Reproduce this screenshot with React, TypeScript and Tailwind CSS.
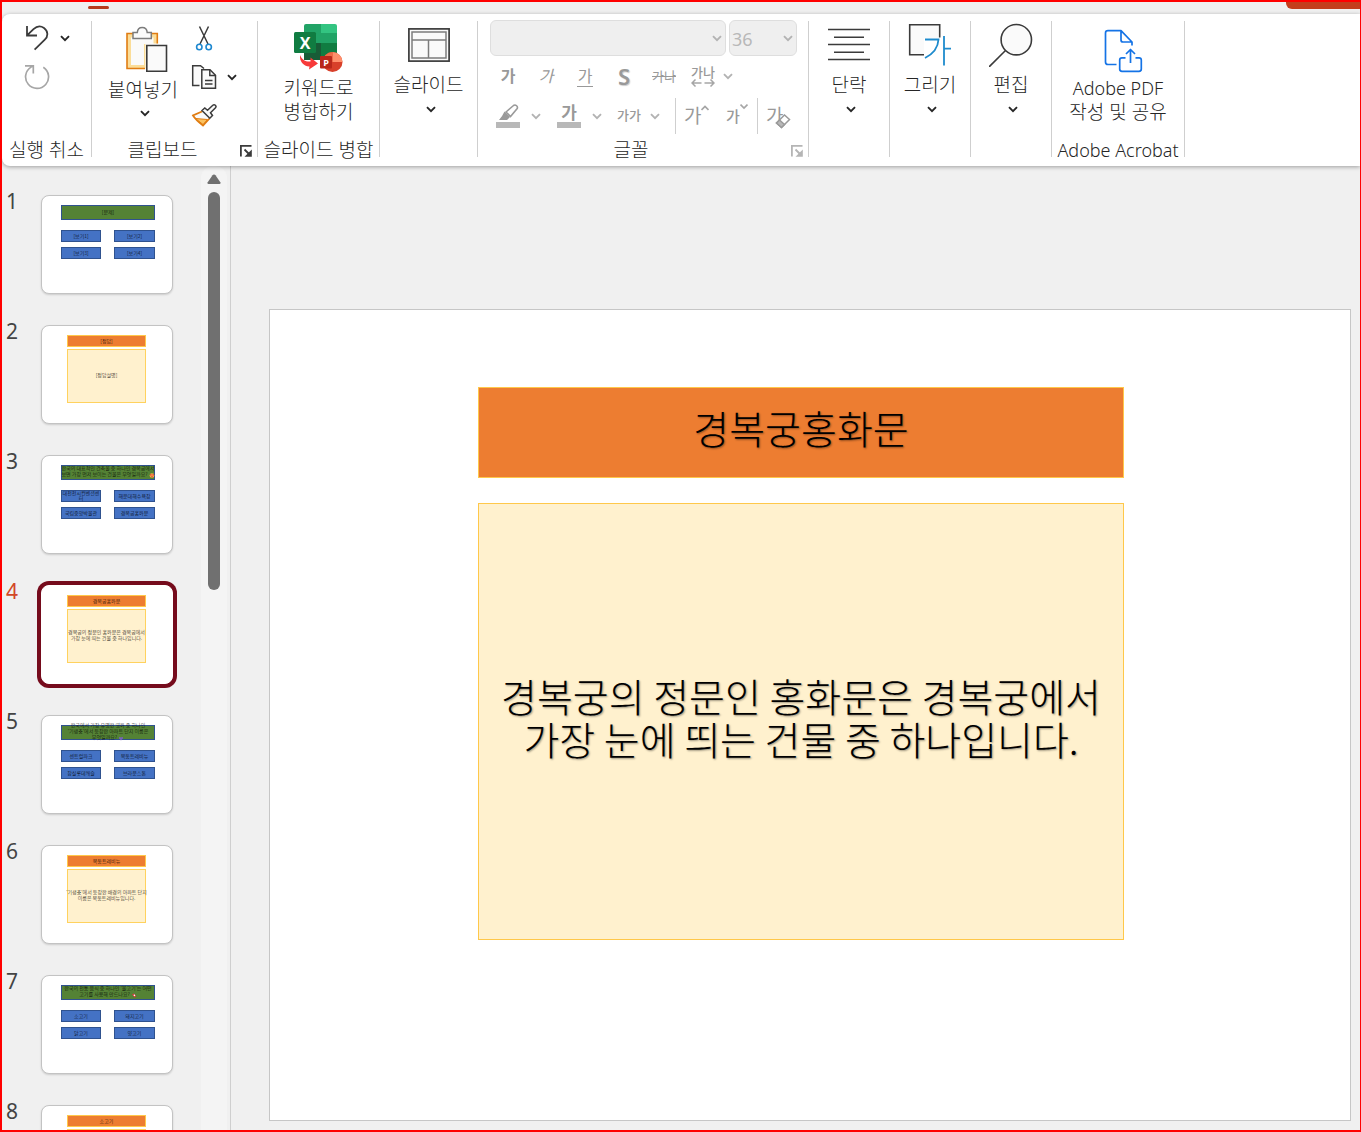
import React from "react";

const ink = "#3b3b3b";
const dim = "#a6a6a6";

function Chevron({ muted = false }: { muted?: boolean }) {
  return (
    <svg width="10" height="7" viewBox="0 0 10 7" fill="none" className="shrink-0">
      <path d="M1 1.2 5 5.2 9 1.2" stroke={muted ? "#b3b3b3" : "#262626"} strokeWidth="1.9" />
    </svg>
  );
}

function Launcher({ muted = false }: { muted?: boolean }) {
  const c = muted ? "#b5b5b5" : ink;
  return (
    <button type="button" aria-label="대화 상자 표시" className="mt-1 mr-1 shrink-0">
      <svg width="14" height="14" viewBox="0 0 14 14" fill="none" stroke={c} strokeWidth="1.8">
        <path d="M1.9 12.500V1.900H12.500M5.500 5.500l5.500 5.500" />
        <path d="M12.800 5.500V12.800H5.500Z" fill={c} stroke="none" />
      </svg>
    </button>
  );
}

function UndoIcon() {
  return (
    <svg width="26" height="26" viewBox="24 25 26 26" fill="none" stroke={ink} strokeWidth="1.8">
      <path d="M27 26V35.5H37M27.3 35.2 33.5 29.2C36.500 26.300 40.500 25.500 44 28C48.300 31.200 48.300 36.300 44.800 39.700L34.600 49.600" />
    </svg>
  );
}

function RedoIcon() {
  return (
    <svg width="26" height="26" viewBox="24 64 26 26" fill="none" stroke={dim} strokeWidth="1.7">
      <path d="M25 65.800H33.300V73.500M43.300 67.200A11.500 11.500 0 1 1 31 67.100L33 66" />
    </svg>
  );
}

function PasteIcon() {
  return (
    <svg width="42" height="46" viewBox="126 26 42 46" fill="none">
      <path d="M127 33.500H157.500V43.500H145.500V68.500H127Z" fill="#fbdd98" />
      <path d="M157.300 43.500V33.500H127V68.500H145" stroke="#e07c12" strokeWidth="1.600" />
      <path d="M131 37.500H153.500V44H144V65H131Z" fill="#fafafa" />
      <path d="M133 38.500V32.500H137.300C137.500 29.500 139.500 27.500 142.200 27.500S147 29.500 147.200 32.500H151.300V38.500Z" fill="#fafafa" stroke="#7c7c7c" strokeWidth="1.5" />
      <path d="M146.800 45.500H166.500V71.200H146.800Z" fill="#fafafa" stroke={ink} strokeWidth="1.6" />
    </svg>
  );
}

function ScissorsIcon() {
  return (
    <svg width="26" height="26" viewBox="191 26 26 26" fill="none">
      <path d="M199.500 26.500 208 44M208.500 26.500 200 44" stroke={ink} strokeWidth="1.5" />
      <circle cx="199.300" cy="47" r="2.700" stroke="#1e88d0" strokeWidth="1.6" />
      <circle cx="208.700" cy="47" r="2.700" stroke="#1e88d0" strokeWidth="1.6" />
    </svg>
  );
}

function CopyIcon() {
  return (
    <svg width="26" height="26" viewBox="191 64 26 26" fill="none" stroke={ink} strokeWidth="1.5">
      <path d="M199.500 85.500H192.700V65.700H200.500L204 68.500" fill="#fafafa" />
      <path d="M201.800 69.800H210L215.500 75.300V88.300H201.800Z" fill="#fafafa" />
      <path d="M209.800 70V75.500H215.500M205 80.500H212.500M205 84H212.500" />
    </svg>
  );
}

function BrushIcon() {
  return (
    <svg width="26" height="26" viewBox="191 102 26 26" fill="none">
      <path d="M202 111.500 193 115.500C195.500 119.500 198.500 122 203 125.500L209.500 118.500" fill="#fafafa" stroke="#e07c12" strokeWidth="1.800" />
      <path d="M195.500 118.500 207.500 119.500 203 124.500Z" fill="#fbc25f" stroke="#e07c12" strokeWidth="1" />
      <path d="M202 110.500 204.800 108 207.500 110.300 212.800 105.300C214.500 103.800 217 106 215.500 107.800L210.500 112.800 212.500 115.500 209.800 118.200Z" fill="#fafafa" stroke={ink} strokeWidth="1.500" />
    </svg>
  );
}

function MergeIcon() {
  return (
    <svg width="50" height="50" viewBox="294 23 50 50">
      <path d="M306 24H321V33H304V26Q304 24 306 24Z" fill="#21a366" />
      <path d="M321 24H335Q337 24 337 26V33H321Z" fill="#33c481" />
      <path d="M304 33H321V43H304Z" fill="#21a366" />
      <path d="M321 33H337V43H321Z" fill="#21a366" />
      <path d="M304 43H321V60H304Z" fill="#185c37" />
      <path d="M321 43H337V60H321Z" fill="#107c41" />
      <rect x="294" y="32" width="22" height="21" rx="1.500" fill="#107c41" />
      <text x="305" y="48.500" textAnchor="middle" fontSize="16" fontWeight="700" fill="#fff" fontFamily="Open Sans, sans-serif">X</text>
      <circle cx="332.500" cy="62" r="10" fill="#d8402a" />
      <path d="M332.500 52A10 10 0 0 1 342.500 62H332.500Z" fill="#ff8f6b" />
      <path d="M332.500 52A10 10 0 0 0 322.500 62H332.500Z" fill="#ed6c47" />
      <path d="M300 55C302 60 306 62 310.500 61.500V57.500L318 63.500 309 69.500 309.500 66.500C303 66 299.500 61.500 300 55Z" fill="#f73a3a" />
      <rect x="320" y="56" width="12" height="12.500" rx="1" fill="#b9271a" />
      <text x="326" y="66" textAnchor="middle" fontSize="9" fontWeight="700" fill="#fff" fontFamily="Open Sans, sans-serif">P</text>
    </svg>
  );
}

function LayoutIcon() {
  return (
    <svg width="42" height="34" viewBox="0 0 42 34" fill="none">
      <rect x="0.900" y="0.900" width="40.200" height="32.200" fill="#fafafa" stroke={ink} strokeWidth="1.700" />
      <path d="M4 4H38V30H4ZM4 12H38M20.500 12V30" stroke="#7c7c7c" strokeWidth="1.500" />
    </svg>
  );
}

function ParagraphIcon() {
  return (
    <svg width="42" height="34" viewBox="0 0 42 34" stroke={ink} strokeWidth="1.600">
      <path d="M0 1.500H42M6 9.200H36M0 16.500H42M6 24.200H36M0 31.500H42" />
    </svg>
  );
}

function DrawIcon() {
  return (
    <svg width="44" height="44" viewBox="908 23 44 44" fill="none">
      <path d="M922.500 55H909.700V24.700H939.700V38H924V55Z" fill="#fafafa" />
      <path d="M924 54.800H909.700V24.700H939.700V37.500" stroke={ink} strokeWidth="1.600" />
      <path d="M925 39.500H938.500C938 48 933 54 925 58M944 36V65.500M944 48.700H951" stroke="#1e8bcd" strokeWidth="1.800" />
    </svg>
  );
}

function FindIcon() {
  return (
    <svg width="44" height="44" viewBox="989 23 44 44" fill="none" stroke={ink} strokeWidth="1.600">
      <circle cx="1016.300" cy="39.700" r="15.200" fill="#fafafa" />
      <path d="M1005.500 50.500 989 67" />
    </svg>
  );
}

function PdfIcon() {
  return (
    <svg width="40" height="44" viewBox="1103 29 40 44" fill="none" stroke="#1473e6" strokeWidth="1.700" strokeLinejoin="round">
      <path d="M1116.500 64.500H1108Q1105.500 64.500 1105.500 62V33Q1105.500 30.700 1108 30.700H1121L1132 42V45.500M1121 31V40Q1121 42 1123 42H1132" />
      <path d="M1125.500 57.800H1122Q1119.700 57.800 1119.700 60V69Q1119.700 71.300 1122 71.300H1139Q1141.300 71.300 1141.300 69V60Q1141.300 57.800 1139 57.800H1135.500M1130.500 63V50M1126 54 1130.500 49.500 1135 54" />
    </svg>
  );
}

function HighlighterIcon() {
  return (
    <svg width="24" height="24" viewBox="0 0 24 24" fill="none">
      <rect y="18" width="24" height="6" fill="#b8b8b8" />
      <path d="M10 8 17.500 1.500C19.500 0 22.500 2.500 21 4.800L14.500 12.500Z" stroke="#9a9a9a" strokeWidth="1.600" />
      <path d="M8.500 7.500 14 13 11 16H3Q6.500 12 8.500 7.500Z" fill="#9a9a9a" />
    </svg>
  );
}

function EraserIcon() {
  return (
    <svg width="16" height="16" viewBox="0 0 16 16" fill="#fff" stroke="#9a9a9a" strokeWidth="1.500">
      <path d="M1.500 10 9.500 2 14.500 6.500 6.500 14.500Z" />
      <path d="M1.500 10 4.500 7 9.500 11.500 6.500 14.500Z" fill="#b8b8b8" />
    </svg>
  );
}

function Group({ width, label, launcher, children }: {
  width: string;
  label?: string;
  launcher?: React.ReactNode;
  children: React.ReactNode;
}) {
  const latin = label?.startsWith("Adobe");
  return (
    <section className={`${width} flex shrink-0 flex-col justify-between border-r border-[#cfcfcf]`}>
      {children}
      <div className="flex h-4 items-center">
        <span className={`flex-1 pt-[2px] text-center leading-4 whitespace-nowrap ${latin ? "text-[18px]" : "text-[19px]"} ${launcher ? "pr-[6px]" : ""}`}>
          {label}
        </span>
        {launcher}
      </div>
    </section>
  );
}

function MenuButton({ icon, label }: { icon: React.ReactNode; label: string }) {
  return (
    <button type="button" className="flex w-full flex-col items-center">
      <span className="flex h-12 items-center">{icon}</span>
      <span className="text-[19px] leading-8 whitespace-nowrap">{label}</span>
      <span className="mt-[2px] ml-1 flex h-3 items-center"><Chevron /></span>
    </button>
  );
}

function SmallMenu({ label }: { label: string }) {
  return (
    <button type="button" disabled aria-label={label} className="flex h-8 w-8 items-center justify-center">
      <Chevron muted />
    </button>
  );
}

function FontGroup() {
  return (
    <div className="-mt-px pl-3 font-normal text-[#999]">
      <div className="flex gap-[3px]">
        <label className="relative flex items-center">
          <select disabled aria-label="글꼴" className="h-9 w-[236px] appearance-none rounded-md border border-[#dedede] bg-[#efefef]">
            <option />
          </select>
          <span className="absolute right-1"><Chevron muted /></span>
        </label>
        <label className="relative flex items-center">
          <select disabled aria-label="글꼴 크기" className="h-9 w-[68px] appearance-none rounded-md border border-[#dedede] bg-[#efefef] pt-[2px] pl-[2px] text-[18px] text-[#b8b8b8] opacity-100">
            <option>36</option>
          </select>
          <span className="absolute right-1"><Chevron muted /></span>
        </label>
      </div>
      <div className="mt-1 flex h-8 items-center leading-5">
        <button type="button" disabled className="w-9 text-[16px] font-bold">가</button>
        <button type="button" disabled className="w-10 text-[16px] italic">가</button>
        <button type="button" disabled className="flex w-[38px] justify-center text-[16px]">
          <span className="w-4 border-b border-[#999]">가</span>
        </button>
        <button type="button" disabled className="w-10 text-[22px] font-semibold [text-shadow:1px_1px_1px_#ccc]">S</button>
        <button type="button" disabled className="w-10 text-[13px] line-through">가나</button>
        <button type="button" disabled className="flex w-[38px] flex-col items-center text-[13px] leading-[14px] font-medium">
          가나
          <svg width="24" height="8" viewBox="0 0 24 8" fill="none" stroke="#a6a6a6" strokeWidth="1.500">
            <path d="M10.500 4H1M4.500 0.500 1 4 4.500 7.500M13.500 4H23M19.500 0.500 23 4 19.500 7.500" />
          </svg>
        </button>
        <span className="-ml-[10px]"><SmallMenu label="문자 간격" /></span>
      </div>
      <div className="mt-[6px] flex h-9 items-center">
        <button type="button" disabled aria-label="텍스트 강조 색" className="flex w-9 justify-center"><HighlighterIcon /></button>
        <span className="-mx-1 flex w-7 justify-center"><SmallMenu label="강조 색 선택" /></span>
        <button type="button" disabled className="ml-[11px] flex w-6 flex-col items-center text-[17px] leading-[18px] font-bold">
          가
          <span className="h-[6px] w-6 bg-[#b8b8b8]" />
        </button>
        <SmallMenu label="글꼴 색 선택" />
        <button type="button" disabled className="ml-[2px] w-7 text-center text-[13px] font-medium whitespace-nowrap">가가</button>
        <span className="-mx-1"><SmallMenu label="대/소문자 바꾸기" /></span>
        <span className="ml-2 h-9 border-l border-[#cfcfcf]" />
        <button type="button" disabled aria-label="글꼴 크기 크게" className="ml-2 flex w-[26px] text-[19px] leading-6">
          가
          <svg width="8" height="8" viewBox="0 0 8 8" fill="none" stroke={dim} strokeWidth="1.700" className="shrink-0"><path d="M0.500 6 4 2.500 7.500 6" /></svg>
        </button>
        <button type="button" disabled aria-label="글꼴 크기 작게" className="ml-4 flex w-[22px] text-[15px] leading-7 font-medium">
          가
          <svg width="8" height="8" viewBox="0 0 8 8" fill="none" stroke={dim} strokeWidth="1.700" className="shrink-0"><path d="M0.500 2.500 4 6 7.500 2.500" /></svg>
        </button>
        <span className="ml-[9px] h-9 border-l border-[#cfcfcf]" />
        <button type="button" disabled aria-label="모든 서식 지우기" className="relative ml-2 w-6 text-left text-[19px] leading-6">
          가
          <span className="absolute top-[9px] left-[9px]"><EraserIcon /></span>
        </button>
      </div>
    </div>
  );
}

function Ribbon() {
  return (
    <div role="toolbar" className="relative z-10 flex h-[152px] shrink-0 overflow-hidden rounded-l-lg bg-white pt-[7px] pb-[9px] font-light text-[#262626] shadow-[0_1px_4px_rgba(0,0,0,0.35)]">
      <Group width="w-[90px]" label="실행 취소">
        <div className="flex flex-col gap-[13px] pt-1 pl-[22px]">
          <div className="flex items-center gap-[10px]">
            <button type="button" aria-label="실행 취소"><UndoIcon /></button>
            <button type="button" aria-label="실행 취소 목록"><Chevron /></button>
          </div>
          <button type="button" aria-label="다시 실행" className="w-[26px]"><RedoIcon /></button>
        </div>
      </Group>
      <Group width="w-[166px]" label="클립보드" launcher={<Launcher />}>
        <div className="flex pl-[14px]">
          <button type="button" className="flex w-[74px] flex-col items-center pt-[5px]">
            <span className="ml-2"><PasteIcon /></span>
            <span className="mt-[2px] text-[19px] leading-8 whitespace-nowrap">붙여넣기</span>
            <span className="mt-px ml-1 flex h-3 items-center"><Chevron /></span>
          </button>
          <div className="ml-[11px] flex flex-col gap-[12px] pt-[5px]">
            <button type="button" aria-label="잘라내기" className="w-[26px]"><ScissorsIcon /></button>
            <div className="flex items-center gap-[10px]">
              <button type="button" aria-label="복사"><CopyIcon /></button>
              <button type="button" aria-label="복사 옵션"><Chevron /></button>
            </div>
            <button type="button" aria-label="서식 복사" className="w-[26px]"><BrushIcon /></button>
          </div>
        </div>
      </Group>
      <Group width="w-[122px]" label="슬라이드 병합">
        <button type="button" className="flex flex-col items-center pt-[2px] text-[19px] leading-6">
          <MergeIcon />
          <span className="mt-[3px]">키워드로<br />병합하기</span>
        </button>
      </Group>
      <Group width="w-[98px]">
        <MenuButton icon={<LayoutIcon />} label="슬라이드" />
      </Group>
      <Group width="w-[331px]" label="글꼴" launcher={<Launcher muted />}>
        <FontGroup />
      </Group>
      <Group width="w-[81px]">
        <MenuButton icon={<ParagraphIcon />} label="단락" />
      </Group>
      <Group width="w-[81px]">
        <MenuButton icon={<DrawIcon />} label="그리기" />
      </Group>
      <Group width="w-[81px]">
        <MenuButton icon={<FindIcon />} label="편집" />
      </Group>
      <Group width="w-[133px]" label="Adobe Acrobat">
        <button type="button" className="flex flex-col items-center pt-2 text-[19px] leading-6">
          <span className="ml-[10px]"><PdfIcon /></span>
          <span className="mt-[3px] text-[18px]">Adobe PDF</span>
          <span>작성 및 공유</span>
        </button>
      </Group>
    </div>
  );
}

type Mark = "face" | "heart" | "meat";
type Slide =
  | { kind: "quiz"; question: string[]; mark?: Mark; options: string[][] }
  | { kind: "answer"; title: string; body: string[] };

const slides: Slide[] = [
  { kind: "quiz", question: ["[문제]"], options: [["[보기1]"], ["[보기2]"], ["[보기3]"], ["[보기4]"]] },
  { kind: "answer", title: "[정답]", body: ["[정답설명]"] },
  {
    kind: "quiz",
    question: ["한국의 대표적인 건축물 중 하나인 경복궁에서", "보면 가장 먼저 보이는 건물은 무엇일까요?"],
    mark: "face",
    options: [["대전전시컨벤션센", "터"], ["해운대해수욕장"], ["국립중앙박물관"], ["경복궁홍화문"]],
  },
  { kind: "answer", title: "경복궁홍화문", body: ["경복궁의 정문인 홍화문은 경복궁에서", "가장 눈에 띄는 건물 중 하나입니다."] },
  {
    kind: "quiz",
    question: ["한국에서 가장 유명한 영화 중 하나인", "'기생충'에서 등장한 아파트 단지 이름은", "무엇일까요?"],
    mark: "heart",
    options: [["센트럴파크"], ["목동트레비뉴"], ["잠실롯데캐슬"], ["브라운스톤"]],
  },
  { kind: "answer", title: "목동트레비뉴", body: ["'기생충'에서 등장한 배경의 아파트 단지", "이름은 목동트레비뉴입니다."] },
  {
    kind: "quiz",
    question: ["한국의 전통 음식 중 하나인 '불고기'는 어떤", "고기를 사용해 만드나요?"],
    mark: "meat",
    options: [["소고기"], ["돼지고기"], ["닭고기"], ["양고기"]],
  },
  { kind: "answer", title: "소고기", body: [] },
];

function Emoji({ mark }: { mark: Mark }) {
  return (
    <svg width="6" height="5" viewBox="0 0 6 6" className="ml-px inline-block align-middle">
      {mark === "face" && (
        <>
          <circle cx="3" cy="3" r="2.800" fill="#f6b83c" />
          <path d="M0.500 1.500h2v1.500h-2zM3.500 1.500h2v1.500h-2zM2 4h2v1H2z" fill="#e2304a" />
        </>
      )}
      {mark === "heart" && <path d="M3 5.500 0.500 2.800Q0.500 0.500 3 1.800 5.500 0.500 5.500 2.800Z" fill="#7a63b8" />}
      {mark === "meat" && (
        <>
          <path d="M0.500 1.500 3 0.500 5.800 4 3.500 5.500Z" fill="#d23a3a" />
          <circle cx="3.500" cy="2.800" r="1" fill="#fff" />
        </>
      )}
    </svg>
  );
}

function Lines({ lines, mark }: { lines: string[]; mark?: Mark }) {
  return (
    <>
      {lines.map((line, i) => (
        <span key={line} className="block whitespace-nowrap">
          {line}
          {mark && i === lines.length - 1 && <Emoji mark={mark} />}
        </span>
      ))}
    </>
  );
}

function Thumbnail({ slide }: { slide: Slide }) {
  if (slide.kind === "quiz") {
    return (
      <span className="flex flex-col gap-[10px] pt-[9px] pr-[17px] pl-[19px]">
        <span className="flex h-[15px] flex-col items-center justify-center border border-[#2f528f] bg-[#548235] pb-[2px]">
          <Lines lines={slide.question} mark={slide.mark} />
        </span>
        <span className="grid grid-cols-[40fr_41fr] gap-x-[13px] gap-y-[5px]">
          {slide.options.map((option) => (
            <span key={option[0]} className="flex h-3 flex-col items-center justify-center border border-[#2f528f] bg-[#4472c4] pb-[2px] leading-[5px]">
              <Lines lines={option} />
            </span>
          ))}
        </span>
      </span>
    );
  }
  return (
    <span className="flex flex-col gap-[2px] pt-[9px] pr-[26px] pl-[25px]">
      <span className="flex h-3 flex-col items-center justify-center border border-[#ffc84a] bg-[#ed7d31] pb-px">{slide.title}</span>
      <span className="flex h-[54px] flex-col items-center justify-center border border-[#ffd25e] bg-[#fff1ce] pb-[3px]">
        <Lines lines={slide.body} />
      </span>
    </span>
  );
}

function SlideList({ selected }: { selected: number }) {
  return (
    <aside className="flex shrink-0 border-r border-[#cfcfcf]">
      <ol className="flex w-[199px] flex-col gap-[31px] overflow-hidden pt-[29px] pl-1">
        {slides.map((slide, i) => {
          const current = i === selected;
          return (
            <li key={i} className="flex h-[99px] shrink-0">
              <span className={current ? "w-[35px] text-[21px] leading-3 text-[#d24726]" : "w-[35px] text-[21px] leading-3 text-[#444]"}>
                {i + 1}
              </span>
              <button
                type="button"
                aria-label={`슬라이드 ${i + 1}`}
                className={
                  "flex w-[132px] flex-col overflow-hidden rounded-lg border bg-white text-center font-['Noto_Sans_CJK_KR',sans-serif] text-[5px] leading-[6px] font-light text-black " +
                  (current ? "border-white ring-4 ring-[#750b1c]" : "border-[#c3c3c3] shadow-[0_1px_2px_rgba(0,0,0,0.15)]")
                }
              >
                <Thumbnail slide={slide} />
              </button>
            </li>
          );
        })}
      </ol>
      <div className="mr-[3px] flex w-[26px] flex-col items-center rounded-t-xl bg-[#f4f4f4] pt-2">
        <svg width="14" height="10" viewBox="0 0 14 10">
          <path d="M7 0.500Q8 0.500 8.500 1.200L13.500 8.500Q13.800 10 12.500 10H1.500Q0.200 10 0.500 8.500L5.500 1.200Q6 0.500 7 0.500Z" fill="#707070" />
        </svg>
        <div className="mt-2 h-[398px] w-3 rounded-full bg-[#707070]" />
      </div>
    </aside>
  );
}

function SlideCanvas() {
  return (
    <main className="flex min-w-0 flex-1 flex-col justify-end pr-[9px] pb-[9px] pl-[38px] font-['Noto_Sans_CJK_KR',sans-serif]">
      <article className="flex aspect-[1082/812] flex-col gap-[25px] border border-[#c6c6c6] bg-white pt-[77px] pr-[226px] pl-[208px] text-center text-[39px] leading-[43px] font-light break-keep text-black [text-shadow:1px_1px_2px_rgba(0,0,0,0.4)]">
        <h1 className="flex h-[91px] items-center justify-center border border-[#ffc84a] bg-[#ed7d31] pb-[10px]">경복궁홍화문</h1>
        <p className="flex h-[437px] items-center justify-center border border-[#ffc84a] bg-[#fff1ce] px-4 pb-[10px]">
          경복궁의 정문인 홍화문은 경복궁에서 가장 눈에 띄는 건물 중 하나입니다.
        </p>
      </article>
    </main>
  );
}

export default function App() {
  return (
    <div className="flex h-screen flex-col overflow-hidden border-2 border-r border-[#ff0000] bg-[#f0f0f0] font-['Noto_Sans','Noto_Sans_CJK_KR',sans-serif]">
      <header className="flex h-3 shrink-0 items-start justify-between pl-[86px]">
        <span className="mt-1 h-[3px] w-[21px] rounded-full bg-[#b83a1c]" />
        <button type="button" aria-label="공유" className="h-[7px] w-[74px] rounded-bl-md bg-[#c43e1c]" />
      </header>
      <Ribbon />
      <div className="flex min-h-0 flex-1">
        <SlideList selected={3} />
        <SlideCanvas />
      </div>
    </div>
  );
}
